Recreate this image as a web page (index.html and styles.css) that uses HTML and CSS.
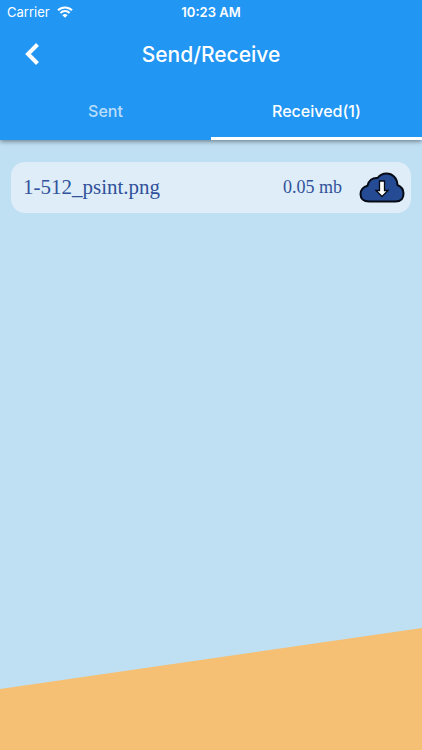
FILE: index.html
```html
<!DOCTYPE html>
<html lang="en">
<head>
  <meta charset="UTF-8">
  <meta name="viewport" content="width=device-width, initial-scale=1.0">
  <title>Send/Receive</title>
  <link rel="stylesheet" href="styles.css">
</head>
<body>
  <header class="header">
    <div class="status">
      <div class="carrier">
        <span>Carrier</span>
        <svg width="16" height="12" viewBox="0 0 16 12" aria-hidden="true">
          <path d="M1 4.3a10 10 0 0 1 14 0M3.400 6.900a6.500 6.500 0 0 1 9.200 0" fill="none" stroke="#fff" stroke-width="2.100"/>
          <path d="M5.400 9.200a3.700 3.700 0 0 1 5.200 0L8 11.800z" fill="#fff"/>
        </svg>
      </div>
      <span class="time">10:23 AM</span>
    </div>

    <div class="title-bar">
      <button class="back" type="button" aria-label="Back">
        <svg width="16" height="24" viewBox="0 0 16 24" aria-hidden="true">
          <path d="M13.500 2.500 4 12l9.500 9.500" fill="none" stroke="#fff" stroke-width="4"/>
        </svg>
      </button>
      <h1>Send/Receive</h1>
    </div>

    <nav class="tabs">
      <button class="tab" type="button">Sent</button>
      <button class="tab active" type="button">Received(1)</button>
    </nav>
  </header>

  <main class="files">
    <div class="file">
      <span class="name">1-512_psint.png</span>
      <span class="size">0.05 mb</span>
      <button class="download" type="button" aria-label="Download">
        <svg width="46" height="32" viewBox="0 0 46 32" aria-hidden="true">
          <path d="M10 29.500C4.500 29.500 1.500 26.500 1.500 22.300C1.500 18 4.500 14.700 8.500 13.700C9.500 8.500 13.500 5.500 18.500 6C21 2.800 24 1.500 27.500 1.500C33.500 1.500 38.200 6 38.500 13C42 14.500 44.500 17.500 44.500 21.500C44.500 26.500 41.500 29.500 36.500 29.500Z" fill="#244b93" stroke="#050a14" stroke-width="2" stroke-linejoin="round"/>
          <path d="M20.500 9h5v9.500h3.500L23 24.500l-6-6h3.500z" fill="#fff" stroke="#050a14" stroke-width="1.300"/>
        </svg>
      </button>
    </div>
  </main>

  <div class="slope"></div>
</body>
</html>
```

FILE: styles.css
```css
* {
  box-sizing: border-box;
}
body {
  margin: 0;
  min-height: 100vh;
  display: flex;
  flex-direction: column;
  background-color: #bfdff3;
  font-family: Inter, "Liberation Sans", sans-serif;
}
button {
  padding: 0;
  border: 0;
  background: none;
  font: inherit;
  cursor: pointer;
}
svg {
  display: block;
}
.header {
  background-color: #2196f3;
  color: white;
  box-shadow: 0 1px 5px rgba(0,0,0,0.5);
}
.status {
  display: grid;
  grid-template-columns: 1fr auto 1fr;
  align-items: center;
  height: 24px;
  padding: 0 7px;
  font-size: 13px;
}
.carrier {
  display: flex;
  align-items: center;
  gap: 7px;
}
.time {
  font-weight: 600;
}
.title-bar {
  display: grid;
  grid-template-columns: 64px 1fr 64px;
  align-items: center;
  height: 60px;
}
.back {
  display: flex;
  justify-content: center;
  padding: 12px 0;
}
h1 {
  margin: 0;
  font-size: 21px;
  font-weight: 500;
  text-align: center;
}
.tabs {
  display: flex;
}
.tab {
  flex: 1;
  height: 56px;
  border-bottom: 3px solid transparent;
  color: rgba(255,255,255,0.7);
  font-size: 16px;
  font-weight: 500;
}
.tab.active {
  border-bottom-color: white;
  color: white;
}
.files {
  flex: 1;
  padding: 22px 11px;
}
.file {
  display: flex;
  align-items: center;
  height: 51px;
  padding: 0 6px 0 12px;
  border-radius: 14px;
  background-color: #deedf8;
  color: #31529a;
  font-family: "Liberation Serif", serif;
}
.name {
  flex: 1;
  font-size: 21px;
}
.size {
  margin-right: 17px;
  font-size: 18px;
}
.slope {
  height: 122px;
  background-color: #f5c074;
  clip-path: polygon(0 50%, 100% 0, 100% 100%, 0 100%);
}
```
